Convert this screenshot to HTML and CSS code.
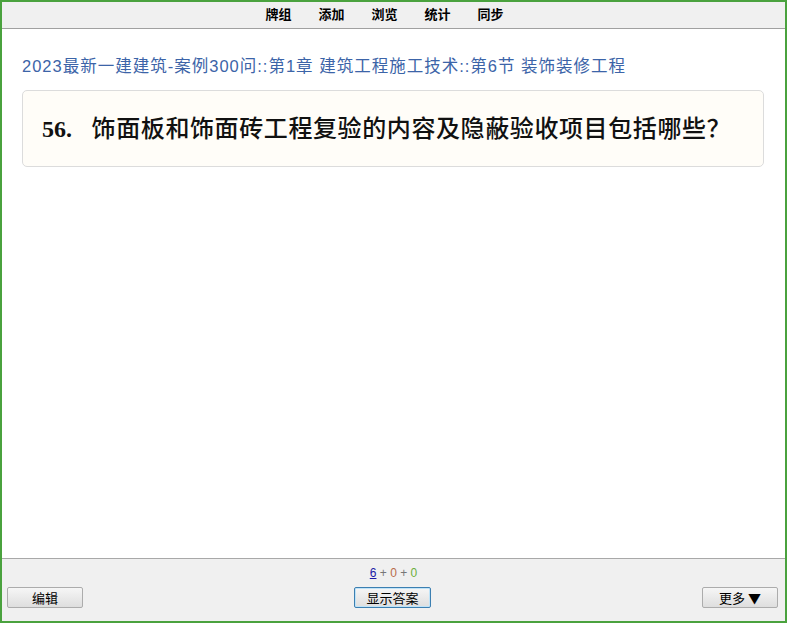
FILE: index.html
```html
<!DOCTYPE html>
<html>
<head>
    <title>Anki</title>
    <link rel="stylesheet" href="styles.css">
</head>
<body>
    <div class="window">
        <div class="toolbar">
            <a href="#">牌组</a>
            <a href="#">添加</a>
            <a href="#">浏览</a>
            <a href="#">统计</a>
            <a href="#">同步</a>
        </div>

        <div class="main">
            <div class="deck-path">2023最新一建建筑-案例300问::第1章 建筑工程施工技术::第6节 装饰装修工程</div>
            <div class="card">
                <span class="num">56.</span> 饰面板和饰面砖工程复验的内容及隐蔽验收项目包括哪些？
            </div>
        </div>

        <div class="bottom">
            <div class="counts">
                <span class="new">6</span> + <span class="learn">0</span> + <span class="review">0</span>
            </div>
            <div class="buttons">
                <button class="btn">编辑</button>
                <button class="btn primary">显示答案</button>
                <button class="btn">更多 ▼</button>
            </div>
        </div>
    </div>
</body>
</html>
```

FILE: styles.css
```css
html, body {
    margin: 0;
    padding: 0;
    height: 100%;
}
body {
    font-family: "Noto Sans CJK SC", sans-serif;
    background-color: #ffffff;
}
.window {
    height: 623px;
    box-sizing: border-box;
    border: 2px solid #4aa23e;
    display: flex;
    flex-direction: column;
}
.toolbar {
    height: 27px;
    box-sizing: border-box;
    background-color: #f0f0f0;
    border-bottom: 1px solid #a0a0a0;
    display: flex;
    justify-content: center;
    align-items: center;
    gap: 27px;
    padding-right: 18px;
    padding-bottom: 4px;
}
.toolbar a {
    color: #000;
    text-decoration: none;
    font-size: 13px;
    font-weight: bold;
}
.main {
    flex: 1;
    padding: 20px 21px 0 20px;
}
.deck-path {
    color: #3c64a8;
    font-family: "Liberation Sans", "Noto Sans CJK SC", sans-serif;
    font-size: 16.5px;
    letter-spacing: 1px;
    line-height: 22px;
    margin-top: 6px;
}
.card {
    margin-top: 13px;
    background-color: #fffdf8;
    border: 1px solid #dcdcdc;
    border-radius: 5px;
    padding: 23px 19px 22px;
    font-family: "Liberation Serif", "Noto Sans CJK SC", serif;
    font-size: 24px;
    letter-spacing: 0.6px;
    line-height: 30px;
    font-weight: 500;
    color: #111;
}
.num {
    font-weight: bold;
    letter-spacing: 0;
    margin-right: 13px;
}
.bottom {
    height: 62px;
    background-color: #f0f0f0;
    border-top: 1px solid #a8a8a8;
    display: flex;
    flex-direction: column;
}
.counts {
    text-align: center;
    font-family: "Liberation Sans", "Noto Sans CJK SC", sans-serif;
    font-size: 12px;
    color: #777;
    margin-top: 7px;
    height: 15px;
}
.new {
    color: #1a1aa6;
    text-decoration: underline;
}
.learn {
    color: #b86b4a;
}
.review {
    color: #6cae3c;
}
.buttons {
    display: flex;
    justify-content: space-between;
    align-items: center;
    padding: 6px 7px 0 5px;
}
.btn {
    width: 76px;
    height: 21px;
    font-family: "Noto Sans CJK SC", sans-serif;
    font-size: 13px;
    background: linear-gradient(#f6f6f6, #dedede);
    border: 1px solid #acacac;
    border-radius: 2px;
    padding: 0;
    color: #000;
}
.btn.primary {
    width: 77px;
    border: 1px solid #3c7fb1;
    box-shadow: inset 0 0 0 1px #bfe3f8;
}
```
